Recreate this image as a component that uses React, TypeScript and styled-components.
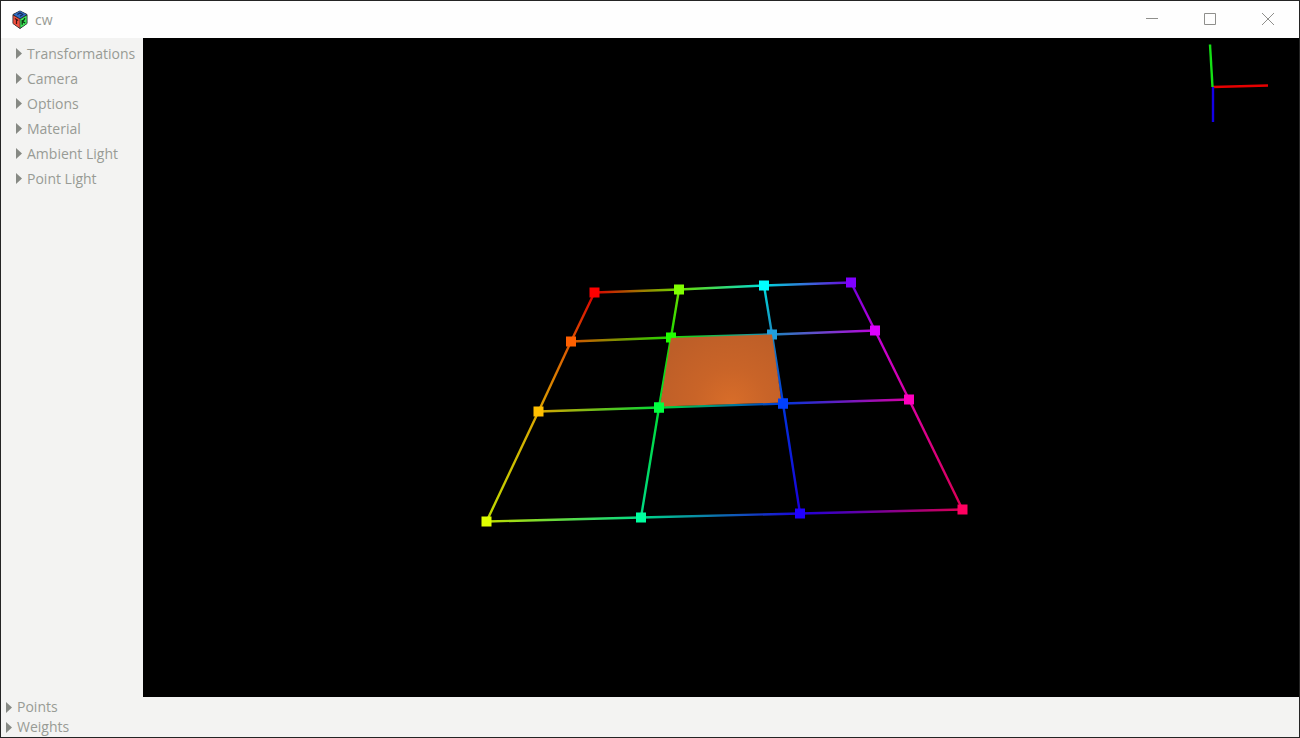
import React from "react";
import styled, { createGlobalStyle } from "styled-components";

const GlobalStyle = createGlobalStyle`
  * { box-sizing: border-box; }
  body { margin: 0; background: #f3f3f2; }
`;

const Window = styled.div`
  display: flex;
  flex-direction: column;
  min-height: 100vh;
  border: 1px solid #242424;
  background: #f3f3f2;
  color: #989b95;
  font-family: "Open Sans", "Noto Sans", sans-serif;
  font-size: 14px;
  line-height: 20px;
`;

const TitleBar = styled.header`
  display: flex;
  align-items: center;
  height: 37px;
  padding-left: 10px;
  background: #fefefe;
`;

const Title = styled.h1`
  flex: 1;
  margin: 0 0 0 6px;
  font-size: 14px;
  font-weight: 400;
`;

const WindowButton = styled.button`
  display: grid;
  place-items: center;
  width: 58px;
  height: 37px;
  padding: 0 0 1px;
  border: 0;
  background: transparent;
  color: #8f8f8c;
`;

const WindowControls = styled.div`
  display: flex;
  padding-right: 2px;
`;

const Workspace = styled.main`
  display: flex;
  flex: 1;
`;

const Sidebar = styled.nav`
  flex: none;
  width: 142px;
  padding: 3px 0 0 15px;
`;

const BottomPanel = styled.footer`
  padding-left: 5px;
`;

const ExpanderButton = styled.button<{ $height: number }>`
  display: flex;
  align-items: center;
  gap: 5px;
  width: 100%;
  height: ${(p) => p.$height}px;
  padding: 0;
  border: 0;
  background: transparent;
  color: inherit;
  font: inherit;
  text-align: left;
  white-space: nowrap;
`;

const Arrow = styled.svg`
  flex: none;
  width: 6px;
  height: 11px;
  fill: #868984;
`;

const Viewport = styled.section`
  position: relative;
  display: flex;
  flex: 1;
  min-width: 0;
  background: #000;
`;

const Scene = styled.svg`
  width: 100%;
  height: auto;
`;

const AxisGizmo = styled.svg`
  position: absolute;
  top: 0;
  right: 20px;
  width: 80px;
  height: 90px;
`;

function Expander({ label, height }: { label: string; height: number }) {
  return (
    <ExpanderButton type="button" aria-expanded={false} $height={height}>
      <Arrow viewBox="0 0 6 11" aria-hidden="true">
        <path d="M0 0L6 5.5L0 11Z" />
      </Arrow>
      {label}
    </ExpanderButton>
  );
}

function AppIcon() {
  return (
    <svg width="18" height="20" viewBox="0 0 18 20" aria-hidden="true">
      <path d="M9 1L16 4.5V13.5L9 18.5L2 13.5V4.5Z" fill="#26282c" stroke="#26282c" strokeWidth="1" strokeLinejoin="round" />
      <path d="M9 1L15.5 4.5L9 8.5L2.5 4.5Z" fill="#2f6cc4" />
      <path d="M2.3 5.5L8.7 9.3V18L2.3 13.5Z" fill="#f0503f" />
      <path d="M9.3 9.3L15.7 5.5V13.5L9.3 18Z" fill="#3ee658" />
      <path d="M6.3 4.5L9 3L11.7 4.5L9 6.2" fill="none" stroke="#14264e" strokeWidth="1.1" />
      <path d="M3.8 8.5L7.2 10.6M5.5 9.8V14" fill="none" stroke="#4a1414" strokeWidth="1.2" />
      <path d="M11.2 10V14.8M14 8.2L11.7 11.8L14.2 12.8" fill="none" stroke="#0c3c14" strokeWidth="1.3" />
    </svg>
  );
}

type Vertex = { x: number; y: number; color: string };

const v = (x: number, y: number, color: string): Vertex => ({ x, y, color });

const lattice: Vertex[][] = [
  [v(451.5, 254.5, "#ff0000"), v(536, 251.5, "#80ff00"), v(621, 247.5, "#00ffff"), v(708, 244.5, "#8000ff")],
  [v(428, 303.5, "#ff6000"), v(528, 299.5, "#20ff00"), v(629, 296.5, "#209fdf"), v(732, 292.5, "#df00ff")],
  [v(395.5, 373.5, "#ffbf00"), v(516, 369.5, "#00ff40"), v(640, 365.5, "#0040ff"), v(766, 361.5, "#ff00bf")],
  [v(343.5, 483.5, "#dfff00"), v(498, 479.5, "#00ff9f"), v(657, 475.5, "#2000ff"), v(819.5, 471.5, "#ff0060")],
];

const edges: { id: string; from: Vertex; to: Vertex }[] = [];
lattice.forEach((row, r) =>
  row.forEach((point, c) => {
    if (c < 3) edges.push({ id: `h${r}${c}`, from: point, to: row[c + 1] });
    if (r < 3) edges.push({ id: `v${r}${c}`, from: point, to: lattice[r + 1][c] });
  })
);

function ControlLattice() {
  return (
    <Scene viewBox="0 0 1156 659" role="img" aria-label="Surface patch with control points">
      <defs>
        {edges.map(({ id, from, to }) => (
          <linearGradient key={id} id={id} gradientUnits="userSpaceOnUse" x1={from.x} y1={from.y} x2={to.x} y2={to.y}>
            <stop offset="0" stopColor={from.color} />
            <stop offset="1" stopColor={to.color} />
          </linearGradient>
        ))}
        <radialGradient id="glow" gradientUnits="userSpaceOnUse" cx="588" cy="366" r="80">
          <stop offset="0" stopColor="#d86d29" />
          <stop offset="0.45" stopColor="#c96428" />
          <stop offset="1" stopColor="#bd5e28" />
        </radialGradient>
      </defs>
      <g strokeWidth="2.4" opacity="0.86">
        {edges.map(({ id, from, to }) => (
          <line key={id} x1={from.x} y1={from.y} x2={to.x} y2={to.y} stroke={`url(#${id})`} />
        ))}
      </g>
      {lattice.flat().map(({ x, y, color }) => (
        <rect key={color} x={x - 5} y={y - 5} width="10" height="10" fill={color} />
      ))}
      <path d="M528 300L629 296.5L638.5 364.5L517 368.5Z" fill="url(#glow)" />
      {[lattice[2][1], lattice[2][2]].map(({ x, y, color }) => (
        <rect key={color} x={x - 5} y={y - 5} width="10" height="10" fill={color} />
      ))}
    </Scene>
  );
}

export default function App() {
  return (
    <>
      <GlobalStyle />
      <Window>
        <TitleBar>
          <AppIcon />
          <Title>cw</Title>
          <WindowControls>
            <WindowButton type="button" aria-label="Minimize">
              <svg width="12" height="12" fill="none" stroke="currentColor">
                <path d="M0 5.5H12" />
              </svg>
            </WindowButton>
            <WindowButton type="button" aria-label="Maximize">
              <svg width="12" height="12" fill="none" stroke="currentColor">
                <path d="M.5 .5H11.5V11.5H.5Z" />
              </svg>
            </WindowButton>
            <WindowButton type="button" aria-label="Close">
              <svg width="12" height="12" fill="none" stroke="currentColor">
                <path d="M0 0L12 12M12 0L0 12" />
              </svg>
            </WindowButton>
          </WindowControls>
        </TitleBar>
        <Workspace>
          <Sidebar aria-label="Settings">
            {["Transformations", "Camera", "Options", "Material", "Ambient Light", "Point Light"].map((label) => (
              <Expander key={label} label={label} height={25} />
            ))}
          </Sidebar>
          <Viewport>
            <ControlLattice />
            <AxisGizmo viewBox="0 0 80 90" fill="none" strokeWidth="2.4" aria-hidden="true">
              <path d="M14 49L69 47.5" stroke="#e60000" />
              <path d="M14 49V84" stroke="#1400e6" />
              <path d="M11 6.5L13.5 49" stroke="#14e014" />
            </AxisGizmo>
          </Viewport>
        </Workspace>
        <BottomPanel>
          <Expander label="Points" height={20} />
          <Expander label="Weights" height={20} />
        </BottomPanel>
      </Window>
    </>
  );
}
